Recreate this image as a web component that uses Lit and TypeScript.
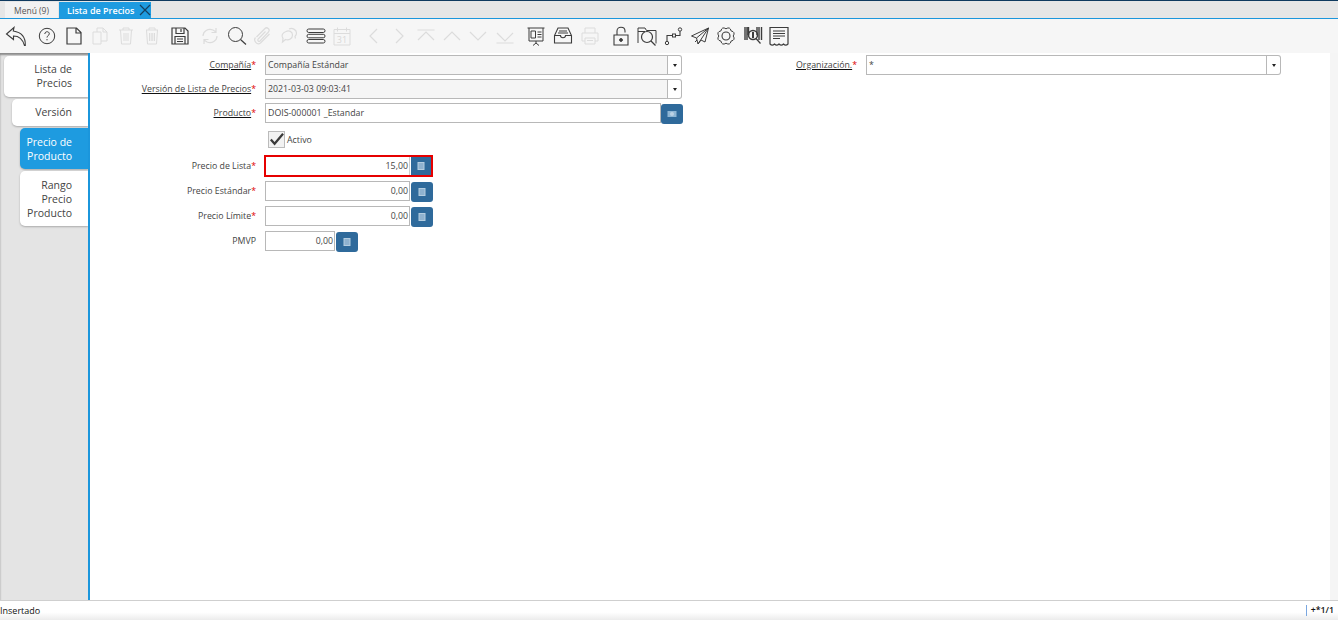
import { LitElement, html, css, svg } from "lit";
import { customElement } from "lit/decorators.js";

type Ico = { c: number; off?: boolean; d: unknown };

function gearPath(): string {
  const cx = 11;
  const cy = 11;
  const lobes = 8;
  let d = "";
  for (let k = 0; k < lobes; k++) {
    const a0 = (k / lobes) * Math.PI * 2;
    const a1 = ((k + 0.5) / lobes) * Math.PI * 2;
    const a2 = ((k + 1) / lobes) * Math.PI * 2;
    const p = (r: number, a: number) =>
      `${(cx + r * Math.cos(a)).toFixed(2)} ${(cy + r * Math.sin(a)).toFixed(2)}`;
    if (k === 0) d += `M${p(7.2, a0)}`;
    d += `Q${p(10.6, a1)} ${p(7.2, a2)}`;
  }
  return d + "z";
}

const ICONS: Ico[] = [
  { c: 16, d: svg`<path d="M9 2.500 1.500 9 8.500 14.500V11c5 0 9 2.500 11 9.500h.8c.3-6.500-2.500-13-12-14.500z" stroke-width="1.100"/>` },
  { c: 47, d: svg`<circle cx="11" cy="11" r="7.700"/><path d="M8.800 9c0-3 4.500-3 4.500-.2 0 1.800-2.300 1.700-2.300 3.700M11 14v1.300"/>` },
  { c: 74, d: svg`<path d="M4 3h9.500L18 7.500V19H4zM13 3v5h5" stroke-width="1.200"/>` },
  { c: 100, off: true, d: svg`<path d="M4 7h8l0 12H4zM8 7V3h6l4 4v9h-6M14 3v4h4"/>` },
  { c: 126, off: true, d: svg`<path d="M4 5h14M8 5V3h6v2M5.500 5 6.500 19h9l1-14M9 8v8M11 8v8M13 8v8"/>` },
  { c: 152, off: true, d: svg`<path d="M5 5h12M8 5V3h6v2M5.500 5 6.500 19h9l1-14M8.500 8v8M10.200 8v8M11.800 8v8M13.500 8v8"/>` },
  { c: 180, d: svg`<path d="M3 3h13l3 3v13H3zM7 3v5.500h8V3M12 4v3M6 19v-7.500h10V19M8 14h6M8 16.500h6" stroke-width="1.200"/>` },
  { c: 210, off: true, d: svg`<path d="M4 11c0-4.500 5-8 10-6l3 2M17 3v4.500h-4.500M18 11c0 4.500-5 8-10 6l-3-2M5 19v-4.500h4.500" stroke-width="1.200"/>` },
  { c: 237, d: svg`<circle cx="9.500" cy="9.500" r="7"/><path d="m14.500 14.500 5.500 5" stroke-width="1.200"/>` },
  { c: 263, off: true, d: svg`<path d="M4.500 12 13 3.500c2-2 5.500 1 3.500 3.500L8 16c-1.200 1.200-3-.5-1.800-2L13.500 6.500M3.500 12.500c-2.500 3 1.500 8 5 5.500l9-9" stroke-width="1.200"/>` },
  { c: 289, off: true, d: svg`<path d="M8 6.500c3-1.500 6.500 0 6.500 3.500s-3.500 5.500-7 4.500L4.500 17l.5-3.500C2.500 10.500 5 7.500 8 6.500zM11 4c3-1.500 7.500.5 7.500 4 0 1.500-.6 2.500-1.500 3.500l.5 2" stroke-width="1.200"/>` },
  { c: 316, d: svg`<rect x="2" y="4" width="18" height="3.500" rx="1.700"/><rect x="2" y="9.300" width="18" height="3.500" rx="1.700"/><rect x="2" y="14.500" width="18" height="3.500" rx="1.700"/>` },
  { c: 342, off: true, d: svg`<path d="M3 4.500h16V20H3zM3 8.500h16M6.500 2.500v4M15.500 2.500v4"/><text x="11" y="18" class="cal">31</text>` },
  { c: 374, off: true, d: svg`<path d="M14 4 7 11l7 7" stroke-width="1.200"/>` },
  { c: 399, off: true, d: svg`<path d="m8 4 7 7-7 7" stroke-width="1.200"/>` },
  { c: 426, off: true, d: svg`<path d="M2.500 5h17M3 15l8-8 8 8" stroke-width="1.200"/>` },
  { c: 452, off: true, d: svg`<path d="m3 15 8-8 8 8" stroke-width="1.200"/>` },
  { c: 478, off: true, d: svg`<path d="m3 7 8 8 8-8" stroke-width="1.200"/>` },
  { c: 505, off: true, d: svg`<path d="M2.500 18h17M3 8l8 8 8-8" stroke-width="1.200"/>` },
  { c: 536, d: svg`<path d="M2.500 3h17M4 3v13h14V3M11 16v2M11 18l-3 2.500M11 18l3 2.500M6 6h4.500v7H6zM12.500 7h4M12.500 9.500h4M12.500 12h4" stroke-width="1"/>` },
  { c: 563, d: svg`<path d="M6 3h10l3.500 7.500V18h-17v-7.500zM2.500 10.500h6c0 3 5 3 5 0h6M7 6h8M6 8h10" stroke-width="1.100"/>` },
  { c: 590, off: true, d: svg`<path d="M6 8V3h10v5M6 16H3V8h16v8h-3M6 13h10v6H6zM8 15.500h6"/>` },
  { c: 621, d: svg`<path d="M4 10h14v10H4zM7 10V6c0-5 8-5 8 0v1.500" stroke-width="1.100"/><circle cx="11" cy="15" r="1.400" fill="#3c3c3c"/>` },
  { c: 647, d: svg`<path d="M2 18V3h7l1.500 2.500H20v13M2 6.500h7" stroke-width="1"/><circle cx="11" cy="12" r="5.500" stroke-width="1.200"/><path d="m15 16 4.500 4.500" stroke-width="1.200"/>` },
  { c: 674, d: svg`<circle cx="17" cy="4.500" r="1.700"/><rect x="9.500" y="9" width="3" height="3"/><circle cx="4" cy="18" r="1.700"/><path d="M4 16v-5.500h5.500M12.500 10.500H17V6.200" stroke-width="1.100"/>` },
  { c: 700, d: svg`<path d="M19.500 3 2.500 11l5 2 1.500 6 3-4 4 2zM19.500 3 7.500 13M19.500 3 9 19M6 17l2-2" stroke-width="1"/>` },
  { c: 726, d: svg`<path d="${gearPath()}" stroke-width="1"/><circle cx="11" cy="11" r="4" stroke-width="1.100"/>` },
  { c: 753, d: svg`<path d="M3 2v13M5 2v13M6.500 2v8M15 2v8M17 2v13M19.500 2v13" stroke-width="1.400"/><circle cx="11" cy="10" r="4.500" stroke-width="1.500"/><path d="m14 13.500 4.500 5" stroke-width="1.200"/><path d="M11 7v6" stroke-width="2"/>` },
  { c: 779, d: svg`<path d="M2 2.500h18v16.500c-1.500 1.500-3 1.500-4.500 0-1.500 1.500-3 1.500-4.500 0-1.500 1.500-3 1.500-4.500 0-1.500 1.500-3 1.500-4.500 0zM5 6h12M5 8.500h12M5 11h12M5 13.500h7" stroke-width="1.200"/>` },
];

@customElement("app-root")
export class AppRoot extends LitElement {
  static styles = css`
    :host {
      display: flex;
      flex-direction: column;
      width: 1338px;
      height: 620px;
      overflow: hidden;
      font-family: "Open Sans", "Noto Sans", sans-serif;
      font-size: 8.8px;
      color: #444;
      background: #fff;
    }
    .tabbar {
      flex: none;
      padding: 1px 0 0 5px;
      box-sizing: border-box;
      display: flex;
      background: #e6e6e6;
      border-top: 1px solid #0f3a5f;
      border-bottom: 1px solid #1b96dc;
      height: 19px;
    }
    .ttab {
      display: flex;
      align-items: center;
      height: 16px;
    }
    .ttab.menu {
      width: 53px;
      padding-left: 9px;
      box-sizing: border-box;
      background: #f2f2f2;
      color: #555;
      font-size: 8.5px;
    }
    .ttab.cur {
      width: 92px;
      margin-left: 1px;
      padding-left: 8px;
      box-sizing: border-box;
      background: #1e9be0;
      color: #fff;
      font-size: 9px;
      font-weight: 600;
      justify-content: space-between;
    }
    .ttab.cur svg {
      width: 12px;
      height: 12px;
      stroke: #16405f;
      stroke-width: 1.200;
      fill: none;
    }
    .toolbar {
      flex: none;
      height: 34px;
      background: #f6f6f6;
      display: flex;
      align-items: center;
      padding-left: 3px;
    }
    .tool {
      flex: none;
      width: 26px;
      height: 22px;
      display: flex;
      justify-content: center;
    }
    .tool svg {
      width: 22px;
      height: 22px;
      fill: none;
      stroke: #3c3c3c;
      stroke-width: 1;
      overflow: visible;
    }
    .tool.off svg {
      stroke: #dcdcdc;
    }
    .cal {
      font: 9px "Open Sans", sans-serif;
      text-anchor: middle;
      fill: #d8d8d8;
      stroke: none;
    }
    .main {
      flex: 1;
      display: flex;
      min-height: 0;
    }
    .side {
      flex: none;
      width: 88px;
      box-sizing: border-box;
      background: #e4e4e4;
      box-shadow: inset 1px 3px 2px -1px #8a8a8a;
      padding-top: 3px;
      display: flex;
      flex-direction: column;
      align-items: flex-end;
      gap: 2px;
    }
    .stab {
      box-sizing: border-box;
      background: #fff;
      border-radius: 5px 0 0 5px;
      text-align: right;
      padding: 6px 16px 7px 0;
      font-size: 10.5px;
      line-height: 14px;
      color: #444;
      box-shadow: 0 1px 2px rgba(0, 0, 0, 0.25);
    }
    .stab.l0 { width: 84px; }
    .stab.l1 { width: 76px; }
    .stab.l2 { width: 68px; padding: 7px 16px 6px 0; }
    .stab.on {
      background: #1e9be0;
      color: #fff;
      font-weight: 500;
    }
    .bar {
      flex: none;
      width: 2px;
      background: #1b96dc;
    }
    .content {
      flex: none;
      width: 1240px;
      padding-top: 2px;
      box-sizing: border-box;
    }
    .strip {
      flex: 1;
      background: #f5f5f5;
    }
    .row {
      display: flex;
      align-items: flex-start;
    }
    .r0 { height: 24px; }
    .r1 { height: 24px; }
    .r2 { height: 28px; }
    .r3 { height: 24px; }
    .r4 { height: 26px; }
    .r5 { height: 25px; }
    .r6 { height: 25px; }
    .lbl {
      flex: none;
      width: 166px;
      text-align: right;
      line-height: 20px;
      height: 20px;
      white-space: nowrap;
    }
    .lbl.o { width: 175px; }
    .lbl.mid { line-height: 22px; }
    .lbl u { color: #444; text-decoration-color: #111; }
    .req { color: #e00000; }
    .fld {
      margin-left: 9px;
      display: flex;
      align-items: flex-start;
    }
    .input {
      box-sizing: border-box;
      height: 20px;
      border: 1px solid #b8b8b8;
      padding: 0 2px;
      line-height: 18px;
      background: #fff;
      white-space: nowrap;
    }
    .input.dis { background: #f5f5f5; }
    .input.num { text-align: right; padding-right: 1px; }
    .w403 { width: 403px; }
    .w396 { width: 396px; }
    .w401 { width: 401px; }
    .w145 { width: 145px; }
    .w70 { width: 70px; }
    .arrow {
      box-sizing: border-box;
      width: 14px;
      height: 20px;
      background: #fff;
      border: 1px solid #b8b8b8;
      border-left: 0;
      border-radius: 0 3px 3px 0;
      display: flex;
      align-items: center;
      justify-content: center;
    }
    .arrow i {
      border: 2.500px solid transparent;
      border-top: 3px solid #222;
      border-bottom: 0;
    }
    .btn {
      flex: none;
      box-sizing: border-box;
      width: 22px;
      height: 20px;
      margin-top: 1px;
      background: #2f6a9b;
      border-radius: 3px;
      display: flex;
      align-items: center;
      justify-content: center;
    }
    .btn.gap { margin-left: 1px; }
    .btn svg { width: 10px; height: 10px; }
    .red {
      display: flex;
      margin-left: -1px;
      border: 2px solid #e60000;
      height: 22px;
      box-sizing: border-box;
    }
    .red .input {
      width: 144px;
      height: 18px;
      border: 0;
      border-right: 1px solid #ccc;
      line-height: 18px;
      padding-right: 1px;
    }
    .red .btn {
      width: 20px;
      height: 18px;
      margin: 0 0 0 1px;
      border-radius: 0;
    }
    .activo {
      margin-left: 178px;
      display: flex;
      align-items: center;
      gap: 2px;
    }
    .check {
      box-sizing: border-box;
      width: 17px;
      height: 17px;
      border: 1px solid #bbb;
      background: #f2f2f2;
      display: flex;
    }
    .check svg { width: 17px; height: 15px; margin-left: -1px; }
    .status {
      flex: none;
      height: 20px;
      box-sizing: border-box;
      border-top: 1px solid #cfcfcf;
      background: linear-gradient(#fff 60%, #ececec);
      display: flex;
      justify-content: space-between;
      align-items: center;
      color: #111;
      font-weight: 500;
    }
    .sleft { padding-bottom: 1px; font-size: 9px; }
    .sright {
      margin-right: 4px;
      border-left: 1px solid #7aa7e0;
      padding-left: 4px;
      font-weight: 600;
      font-size: 8.8px;
      line-height: 11px;
    }
  `;

  private req(text: string, under = false) {
    return html`${under ? html`<u>${text}</u>` : text}<span class="req">*</span>`;
  }

  private calc() {
    return html`<span class="btn gap"><svg viewBox="0 0 10 10"><rect x="1.500" y="1" width="7" height="8" fill="#b4cde0"/><rect x="2.500" y="2" width="5" height="6" fill="#8fb2cf"/></svg></span>`;
  }

  render() {
    let prev = 3;
    const tools = ICONS.map((i) => {
      const left = i.c - 13 - prev;
      prev = i.c + 13;
      return html`<span class="tool ${i.off ? "off" : ""}" style="margin-left:${left}px"><svg viewBox="0 0 22 22">${i.d}</svg></span>`;
    });
    return html`
      <div class="tabbar">
        <div class="ttab menu">Menú (9)</div>
        <div class="ttab cur">Lista de Precios<svg viewBox="0 0 12 12"><path d="M1 1l10 10M11 1 1 11"/></svg></div>
      </div>
      <div class="toolbar">${tools}</div>
      <div class="main">
        <div class="side">
          <div class="stab l0">Lista de<br />Precios</div>
          <div class="stab l1">Versión</div>
          <div class="stab l2 on">Precio de<br />Producto</div>
          <div class="stab l2">Rango<br />Precio<br />Producto</div>
        </div>
        <div class="bar"></div>
        <div class="content">
          <div class="row r0">
            <div class="lbl">${this.req("Compañía", true)}</div>
            <div class="fld"><div class="input dis w403">Compañía Estándar</div><div class="arrow"><i></i></div></div>
            <div class="lbl o">${this.req("Organización.", true)}</div>
            <div class="fld"><div class="input w401">*</div><div class="arrow"><i></i></div></div>
          </div>
          <div class="row r1">
            <div class="lbl">${this.req("Versión de Lista de Precios", true)}</div>
            <div class="fld"><div class="input dis w403">2021-03-03 09:03:41</div><div class="arrow"><i></i></div></div>
          </div>
          <div class="row r2">
            <div class="lbl">${this.req("Producto", true)}</div>
            <div class="fld"><div class="input w396">DOIS-000001 _Estandar</div>
              <span class="btn"><svg viewBox="0 0 10 10"><rect x="0.500" y="2" width="9" height="6" fill="#8fb6d4"/><circle cx="5" cy="5" r="2" fill="#bcd2e4"/></svg></span></div>
          </div>
          <div class="row r3">
            <div class="activo"><span class="check"><svg viewBox="0 0 17 15"><path d="M3 7.500 7 12 16 1.500" fill="none" stroke="#3a3a3a" stroke-width="2.400"/></svg></span>Activo</div>
          </div>
          <div class="row r4">
            <div class="lbl mid">${this.req("Precio de Lista")}</div>
            <div class="fld"><div class="red"><div class="input num">15,00</div>${this.calc()}</div></div>
          </div>
          <div class="row r5">
            <div class="lbl">${this.req("Precio Estándar")}</div>
            <div class="fld"><div class="input num w145">0,00</div>${this.calc()}</div>
          </div>
          <div class="row r6">
            <div class="lbl">${this.req("Precio Límite")}</div>
            <div class="fld"><div class="input num w145">0,00</div>${this.calc()}</div>
          </div>
          <div class="row">
            <div class="lbl">PMVP</div>
            <div class="fld"><div class="input num w70">0,00</div>${this.calc()}</div>
          </div>
        </div>
        <div class="strip"></div>
      </div>
      <div class="status">
        <div class="sleft">Insertado</div>
        <div class="sright">+*1/1</div>
      </div>
    `;
  }
}
